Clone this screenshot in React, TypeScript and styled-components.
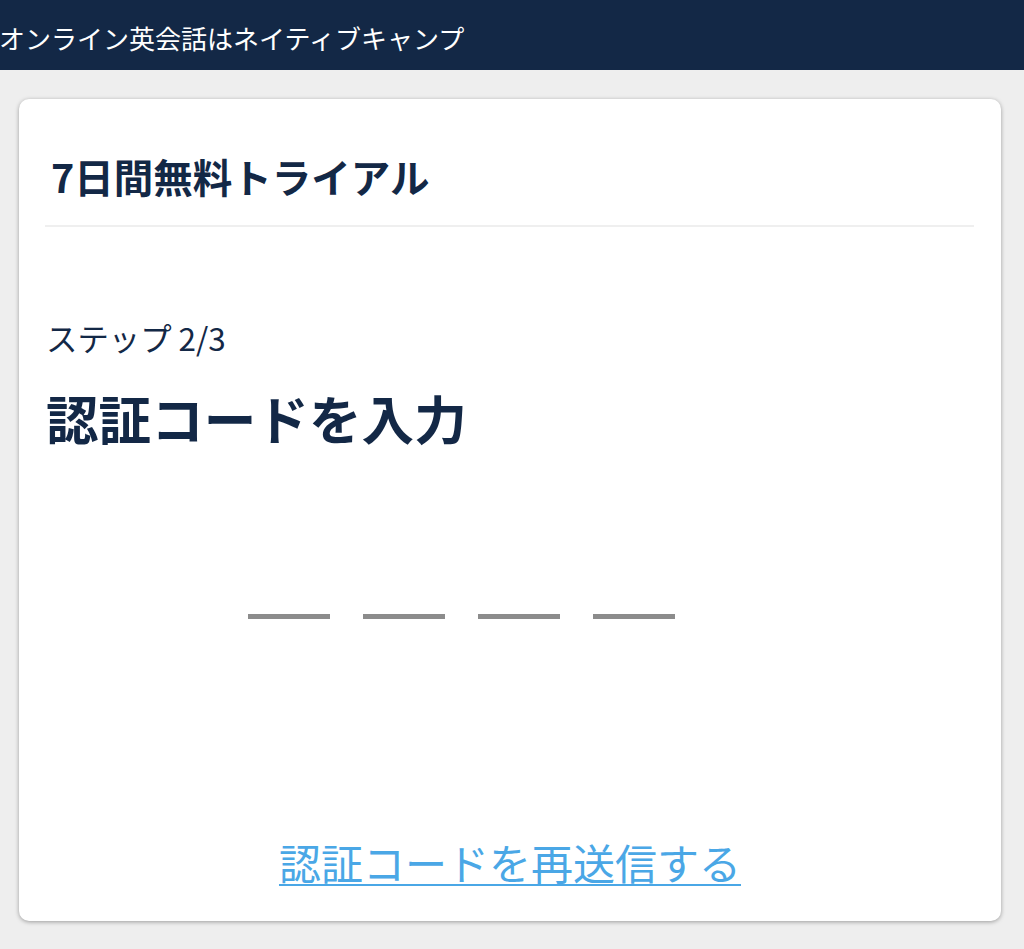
import React from "react";
import styled, { createGlobalStyle } from "styled-components";

const GlobalStyle = createGlobalStyle`
  html, body {
    margin: 0;
    padding: 0;
    background: #eeeeee;
    font-family: "Noto Sans CJK JP", "Noto Sans", sans-serif;
  }
  * { box-sizing: border-box; }
`;

const Page = styled.div`
  min-height: 949px;
  background: #eeeeee;
`;

const Header = styled.header`
  height: 70px;
  background: #132846;
  display: flex;
  align-items: center;
  padding-top: 5px;
`;

const Brand = styled.span`
  color: #ffffff;
  font-size: 26px;
  line-height: 1;
  white-space: nowrap;
  margin-left: -1px;
`;

const Main = styled.main`
  padding: 29px 23px 0 19px;
`;

const Card = styled.section`
  background: #ffffff;
  border-radius: 10px;
  box-shadow: 0 1px 4px rgba(0, 0, 0, 0.35);
  height: 822px;
  display: flex;
  flex-direction: column;
  padding: 0 0 34px;
`;

const CardHeader = styled.div`
  margin: 0 27px 0 26px;
  padding: 54px 0 26px 6px;
  border-bottom: 2px solid #efefef;
`;

const CardTitle = styled.h1`
  margin: 0;
  font-size: 39.5px;
  line-height: 46px;
  font-weight: 700;
  color: #132846;
`;

const Body = styled.div`
  flex: 1;
  display: flex;
  flex-direction: column;
  padding: 92px 27px 0;
`;

const Step = styled.p`
  margin: 0;
  font-size: 31.4px;
  line-height: 37px;
  color: #132846;
`;

const Heading = styled.h2`
  margin: 30px 0 0;
  font-size: 52.6px;
  line-height: 62px;
  font-weight: 700;
  color: #132846;
`;

const OtpRow = styled.div`
  display: flex;
  gap: 33px;
  margin: 111px 0 0 202px;
`;

const OtpInput = styled.input`
  width: 82px;
  height: 60px;
  border: none;
  border-bottom: 5px solid #8c8c8c;
  outline: none;
  background: transparent;
  text-align: center;
  font-size: 40px;
  font-family: inherit;
  padding: 0;
`;

const Footer = styled.div`
  margin-top: auto;
  display: flex;
  justify-content: center;
`;

const ResendLink = styled.a`
  font-size: 42px;
  line-height: 50px;
  color: #4aa7e6;
  text-decoration: underline;
  text-decoration-thickness: 2px;
  text-underline-offset: 4px;
  cursor: pointer;
`;

export default function App() {
  return (
    <Page>
      <GlobalStyle />
      <Header>
        <Brand>オンライン英会話はネイティブキャンプ</Brand>
      </Header>
      <Main>
        <Card>
          <CardHeader>
            <CardTitle>7日間無料トライアル</CardTitle>
          </CardHeader>
          <Body>
            <Step>ステップ 2/3</Step>
            <Heading>認証コードを入力</Heading>
            <OtpRow>
              {[0, 1, 2, 3].map((i) => (
                <OtpInput key={i} maxLength={1} inputMode="numeric" aria-label={`digit ${i + 1}`} />
              ))}
            </OtpRow>
            <Footer>
              <ResendLink>認証コードを再送信する</ResendLink>
            </Footer>
          </Body>
        </Card>
      </Main>
    </Page>
  );
}
